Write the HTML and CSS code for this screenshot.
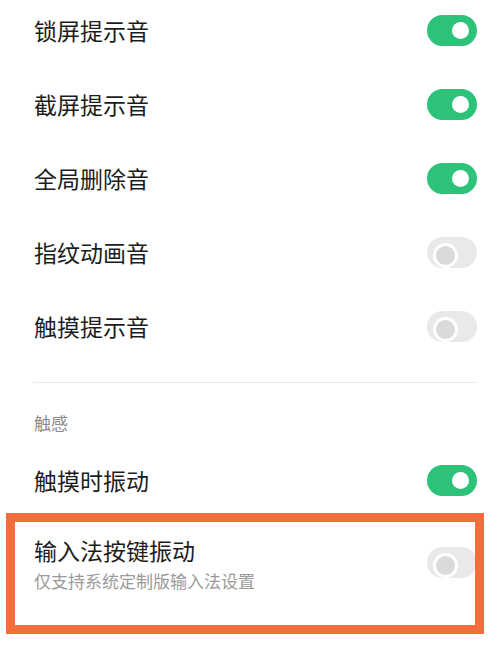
FILE: index.html
```html
<!DOCTYPE html>
<html lang="zh-CN">
<head>
    <meta charset="UTF-8">
    <meta name="viewport" content="width=device-width, initial-scale=1.0">
    <title>声音与振动</title>
    <link rel="stylesheet" href="styles.css">
</head>
<body>
    <div class="page">
        <ul class="list">
            <li class="row"><span class="label">锁屏提示音</span><span class="switch on"></span></li>
            <li class="row"><span class="label">截屏提示音</span><span class="switch on"></span></li>
            <li class="row"><span class="label">全局删除音</span><span class="switch on"></span></li>
            <li class="row"><span class="label">指纹动画音</span><span class="switch"></span></li>
            <li class="row"><span class="label">触摸提示音</span><span class="switch"></span></li>
        </ul>
        <div class="divider"></div>

        <div class="group-title">触感</div>
        <ul class="list">
            <li class="row"><span class="label">触摸时振动</span><span class="switch on"></span></li>
            <li class="row mark">
                <div class="text">
                    <div class="label">输入法按键振动</div>
                    <div class="sub">仅支持系统定制版输入法设置</div>
                </div>
                <span class="switch"></span>
            </li>
        </ul>
    </div>
</body>
</html>
```

FILE: styles.css
```css
*{margin:0;padding:0;box-sizing:border-box;}
li{list-style: none;}
body{
    background: #fff;
    font-family: "Noto Sans CJK SC", "Noto Sans", sans-serif;
    color: #1c1c1c;
    overflow: hidden;
}
.page{
    width: 500px;
    height: 656px;
    margin-top: -7px;
}
.row{
    height: 74px;
    display: flex;
    align-items: center;
    justify-content: space-between;
    padding: 0 23px 0 34px;
}
.label{
    font-size: 23px;
    line-height: 30px;
}
.divider{
    height: 1px;
    margin: 19px 22px 0 33px;
    background: #ececec;
}
.group-title{
    font-size: 17px;
    line-height: 24px;
    color: #8a8a8a;
    padding: 28px 0 8px 34px;
}
/* 开关 */
.switch{
    position: relative;
    flex: none;
    width: 50px;
    height: 31px;
    border-radius: 16px;
    background: #e9e9e9;
}
.switch::after{
    content: "";
    position: absolute;
    top: 6px;
    left: 6px;
    width: 19px;
    height: 19px;
    border-radius: 50%;
    border: 3px solid #fff;
    background: #dadada;
}
.switch.on{
    background: #2cc27a;
}
.switch.on::after{
    top: 7px;
    left: auto;
    right: 8px;
    width: 17px;
    height: 17px;
    border: none;
    background: #fff;
}
/* 标注框 */
.mark{
    height: auto;
    align-items: flex-start;
    margin: -4px 16px 0 6px;
    padding: 13px 0 32px 19px;
    border: 9px solid #f46d3d;
    overflow: hidden;
}
.mark .switch{
    margin-top: 12px;
    margin-right: -2px;
}
.sub{
    font-size: 17px;
    line-height: 24px;
    color: #9a9a9a;
    margin-top: 4px;
}
```
